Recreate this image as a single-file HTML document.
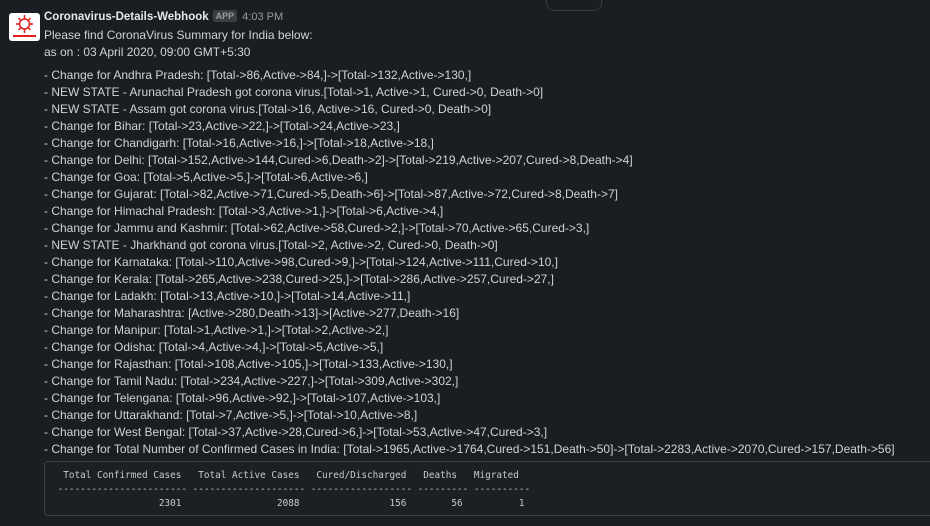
<!DOCTYPE html>
<html><head><meta charset="utf-8"><style>
body{margin:0;width:930px;height:526px;background:#1a1d21;overflow:hidden;font-family:"Liberation Sans",sans-serif;color:#d1d2d3;position:relative}
.top{position:absolute;left:546px;top:-12px;width:54px;height:21px;border:1px solid #3a3d42;border-radius:8px}
.av{position:absolute;left:9px;top:13px;width:31px;height:28px;background:#fff;border-radius:3px}
.name{position:absolute;left:44px;top:10px;font-weight:bold;font-size:11.5px;color:#e8e8e8}
.app{display:inline-block;background:#3a3d42;color:#9a9b9d;font-size:9px;font-weight:bold;padding:1px 3px;margin-left:4px;vertical-align:1px;border-radius:2px}
.time{font-weight:normal;font-size:11px;color:#9a9b9d;margin-left:5px}
.t{position:absolute;left:44px;font-size:12px;white-space:nowrap;line-height:17px}
.code{position:absolute;left:44px;top:461px;width:900px;height:55px;border:1px solid #3a3d42;border-radius:4px;background:#1c1f23;box-sizing:border-box}
pre{margin:0;position:absolute;left:7px;top:7px;font-family:"DejaVu Sans Mono","Liberation Mono",monospace;font-size:9.35px;line-height:14px;color:#c9cacb}
</style></head><body>
<div class="top"></div>
<div class="av"><svg width="31" height="28" viewBox="0 0 31 28"><g stroke="#e0201e" stroke-width="1.5" fill="none"><circle cx="15.5" cy="11" r="5"/><path d="M15.5 2v4M15.5 16v4M7 11h4M20 11h4M9.5 5l3 3M18.5 14l3 3M21.5 5l-3 3M12.5 14l-3 3"/></g><rect x="4" y="22" width="23" height="2" fill="#e0201e"/></svg></div>
<div class="name">Coronavirus-Details-Webhook<span class="app">APP</span><span class="time">4:03 PM</span></div>
<div class="t" style="top:27px">Please find CoronaVirus Summary for India below:</div>
<div class="t" style="top:44px">as on : 03 April 2020, 09:00 GMT+5:30</div>
<div class="t" style="top:67px">- Change for Andhra Pradesh: [Total-&gt;86,Active-&gt;84,]-&gt;[Total-&gt;132,Active-&gt;130,]<br>
- NEW STATE - Arunachal Pradesh got corona virus.[Total-&gt;1, Active-&gt;1, Cured-&gt;0, Death-&gt;0]<br>
- NEW STATE - Assam got corona virus.[Total-&gt;16, Active-&gt;16, Cured-&gt;0, Death-&gt;0]<br>
- Change for Bihar: [Total-&gt;23,Active-&gt;22,]-&gt;[Total-&gt;24,Active-&gt;23,]<br>
- Change for Chandigarh: [Total-&gt;16,Active-&gt;16,]-&gt;[Total-&gt;18,Active-&gt;18,]<br>
- Change for Delhi: [Total-&gt;152,Active-&gt;144,Cured-&gt;6,Death-&gt;2]-&gt;[Total-&gt;219,Active-&gt;207,Cured-&gt;8,Death-&gt;4]<br>
- Change for Goa: [Total-&gt;5,Active-&gt;5,]-&gt;[Total-&gt;6,Active-&gt;6,]<br>
- Change for Gujarat: [Total-&gt;82,Active-&gt;71,Cured-&gt;5,Death-&gt;6]-&gt;[Total-&gt;87,Active-&gt;72,Cured-&gt;8,Death-&gt;7]<br>
- Change for Himachal Pradesh: [Total-&gt;3,Active-&gt;1,]-&gt;[Total-&gt;6,Active-&gt;4,]<br>
- Change for Jammu and Kashmir: [Total-&gt;62,Active-&gt;58,Cured-&gt;2,]-&gt;[Total-&gt;70,Active-&gt;65,Cured-&gt;3,]<br>
- NEW STATE - Jharkhand got corona virus.[Total-&gt;2, Active-&gt;2, Cured-&gt;0, Death-&gt;0]<br>
- Change for Karnataka: [Total-&gt;110,Active-&gt;98,Cured-&gt;9,]-&gt;[Total-&gt;124,Active-&gt;111,Cured-&gt;10,]<br>
- Change for Kerala: [Total-&gt;265,Active-&gt;238,Cured-&gt;25,]-&gt;[Total-&gt;286,Active-&gt;257,Cured-&gt;27,]<br>
- Change for Ladakh: [Total-&gt;13,Active-&gt;10,]-&gt;[Total-&gt;14,Active-&gt;11,]<br>
- Change for Maharashtra: [Active-&gt;280,Death-&gt;13]-&gt;[Active-&gt;277,Death-&gt;16]<br>
- Change for Manipur: [Total-&gt;1,Active-&gt;1,]-&gt;[Total-&gt;2,Active-&gt;2,]<br>
- Change for Odisha: [Total-&gt;4,Active-&gt;4,]-&gt;[Total-&gt;5,Active-&gt;5,]<br>
- Change for Rajasthan: [Total-&gt;108,Active-&gt;105,]-&gt;[Total-&gt;133,Active-&gt;130,]<br>
- Change for Tamil Nadu: [Total-&gt;234,Active-&gt;227,]-&gt;[Total-&gt;309,Active-&gt;302,]<br>
- Change for Telengana: [Total-&gt;96,Active-&gt;92,]-&gt;[Total-&gt;107,Active-&gt;103,]<br>
- Change for Uttarakhand: [Total-&gt;7,Active-&gt;5,]-&gt;[Total-&gt;10,Active-&gt;8,]<br>
- Change for West Bengal: [Total-&gt;37,Active-&gt;28,Cured-&gt;6,]-&gt;[Total-&gt;53,Active-&gt;47,Cured-&gt;3,]<br>
- Change for Total Number of Confirmed Cases in India: [Total-&gt;1965,Active-&gt;1764,Cured-&gt;151,Death-&gt;50]-&gt;[Total-&gt;2283,Active-&gt;2070,Cured-&gt;157,Death-&gt;56]</div>
<div class="code"><pre>  Total Confirmed Cases   Total Active Cases   Cured/Discharged   Deaths   Migrated
 ----------------------- -------------------- ------------------ --------- ----------
                   2301                 2088                156        56          1</pre></div>
</body></html>
